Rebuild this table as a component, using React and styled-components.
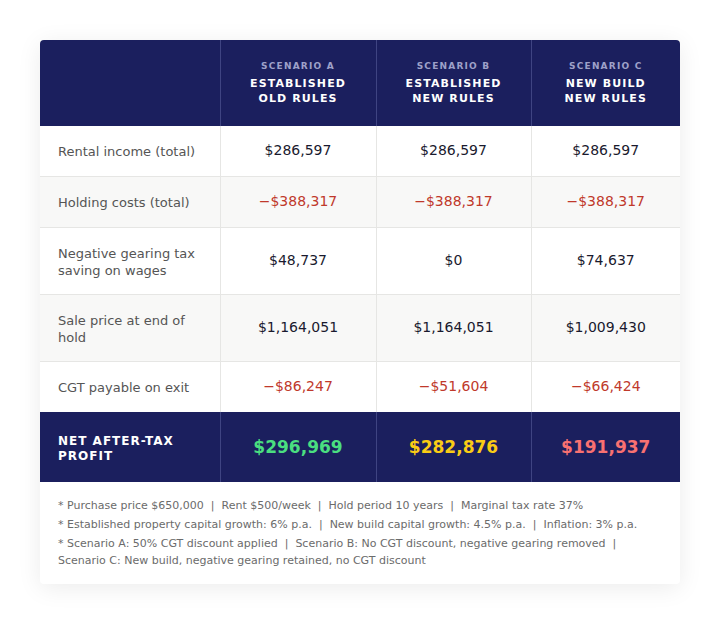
import React from 'react';
import styled, { createGlobalStyle } from 'styled-components';

const GlobalStyle = createGlobalStyle`
  body {
    margin: 0;
    background: #ffffff;
    font-family: "DejaVu Sans", sans-serif;
  }
`;

const scenarios = [
  { tag: 'Scenario A', title: ['Established', 'Old rules'] },
  { tag: 'Scenario B', title: ['Established', 'New rules'] },
  { tag: 'Scenario C', title: ['New build', 'New rules'] },
];

const rows = [
  { label: 'Rental income (total)', values: ['$286,597', '$286,597', '$286,597'] },
  { label: 'Holding costs (total)', values: ['−$388,317', '−$388,317', '−$388,317'], negative: true },
  { label: 'Negative gearing tax saving on wages', values: ['$48,737', '$0', '$74,637'], tall: true },
  { label: 'Sale price at end of hold', values: ['$1,164,051', '$1,164,051', '$1,009,430'], tall: true },
  { label: 'CGT payable on exit', values: ['−$86,247', '−$51,604', '−$66,424'], negative: true },
];

const totals = [
  { value: '$296,969', color: '#4ade80' },
  { value: '$282,876', color: '#facc15' },
  { value: '$191,937', color: '#f87171' },
];

const notes = [
  '* Purchase price $650,000  |  Rent $500/week  |  Hold period 10 years  |  Marginal tax rate 37%',
  '* Established property capital growth: 6% p.a.  |  New build capital growth: 4.5% p.a.  |  Inflation: 3% p.a.',
  '* Scenario A: 50% CGT discount applied  |  Scenario B: No CGT discount, negative gearing removed  |  Scenario C: New build, negative gearing retained, no CGT discount',
];

const App = () => {
  return (
    <Page>
      <GlobalStyle />
      <Card>
        <Table>
          <colgroup>
            <col style={{ width: 180 }} />
            <col style={{ width: 156 }} />
            <col style={{ width: 155 }} />
            <col style={{ width: 149 }} />
          </colgroup>
          <thead>
            <tr>
              <HeadCell />
              {scenarios.map((s) => (
                <HeadCell key={s.tag}>
                  <Tag>{s.tag}</Tag>
                  <Title>
                    {s.title[0]}
                    <br />
                    {s.title[1]}
                  </Title>
                </HeadCell>
              ))}
            </tr>
          </thead>
          <tbody>
            {rows.map((row, i) => (
              <Row key={row.label} $alt={i % 2 === 1} $tall={row.tall}>
                <LabelCell>{row.label}</LabelCell>
                {row.values.map((v, j) => (
                  <ValueCell key={j} $negative={row.negative}>
                    {v}
                  </ValueCell>
                ))}
              </Row>
            ))}
            <TotalRow>
              <TotalLabel>Net after-tax profit</TotalLabel>
              {totals.map((t) => (
                <TotalValue key={t.value} $color={t.color}>
                  {t.value}
                </TotalValue>
              ))}
            </TotalRow>
          </tbody>
        </Table>
        <Notes>
          {notes.map((n) => (
            <Note key={n}>{n}</Note>
          ))}
        </Notes>
      </Card>
    </Page>
  );
};

const Page = styled.div`
  padding: 40px;
`;

const Card = styled.div`
  width: 640px;
  background: #ffffff;
  border-radius: 4px;
  overflow: hidden;
  box-shadow: 0 4px 24px rgba(0, 0, 0, 0.08);
`;

const Table = styled.table`
  width: 100%;
  border-collapse: collapse;
  table-layout: fixed;
`;

const HeadCell = styled.th`
  background: #1b1f5e;
  height: 86px;
  padding: 0 12px;
  text-align: center;
  vertical-align: middle;
  border-left: 1px solid #3f4482;
  &:first-child {
    border-left: none;
  }
`;

const Tag = styled.div`
  font-size: 9px;
  font-weight: bold;
  letter-spacing: 1.2px;
  text-transform: uppercase;
  color: #9ea1c9;
  margin-bottom: 5px;
`;

const Title = styled.div`
  font-size: 11px;
  font-weight: bold;
  letter-spacing: 1.1px;
  line-height: 15px;
  text-transform: uppercase;
  color: #ffffff;
`;

const Row = styled.tr`
  background: ${(p) => (p.$alt ? '#f8f8f7' : '#ffffff')};
  border-top: 1px solid #e6e6e4;
  height: ${(p) => (p.$tall ? '67px' : '51px')};
  &:first-child {
    border-top: none;
    height: 50px;
  }
`;

const LabelCell = styled.td`
  padding: 2px 18px 0;
  font-size: 13px;
  line-height: 17px;
  color: #555555;
  vertical-align: middle;
`;

const ValueCell = styled.td`
  text-align: center;
  font-size: 14px;
  color: ${(p) => (p.$negative ? '#c0392b' : '#1a1a2e')};
  border-left: 1px solid #e6e6e4;
  vertical-align: middle;
  padding-bottom: 3px;
`;

const TotalRow = styled.tr`
  background: #1b1f5e;
  height: 70px;
`;

const TotalLabel = styled.td`
  padding: 3px 18px 0;
  font-size: 12px;
  font-weight: bold;
  letter-spacing: 1px;
  line-height: 15px;
  text-transform: uppercase;
  color: #ffffff;
  vertical-align: middle;
`;

const TotalValue = styled.td`
  text-align: center;
  font-size: 17px;
  font-weight: bold;
  color: ${(p) => p.$color};
  border-left: 1px solid #3f4482;
  vertical-align: middle;
`;

const Notes = styled.div`
  padding: 15px 18px 13px;
`;

const Note = styled.div`
  font-size: 11px;
  line-height: 17px;
  color: #6b6b6b;
  white-space: pre-wrap;
  margin-bottom: 2px;
`;

export default App;
